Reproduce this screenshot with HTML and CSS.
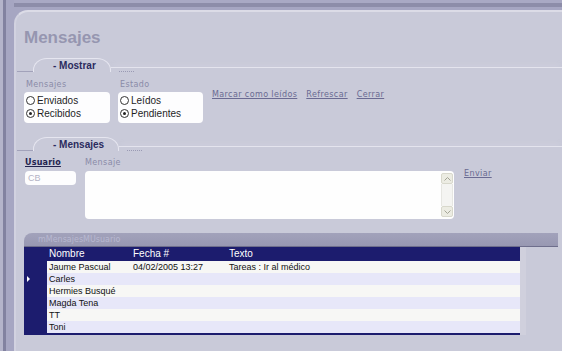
FILE: index.html
```html
<!DOCTYPE html>
<html lang="es">
<head>
    <meta charset="UTF-8">
    <title>Mensajes</title>
    <link rel="stylesheet" href="styles.css">
</head>
<body>
    <div class="frame">
    <div class="panel">
        <h1 class="title">Mensajes</h1>

        <div class="legend">
            <span class="stub"></span>
            <span class="tab">- Mostrar</span>
            <span class="rest"></span>
        </div>

        <div class="filters">
            <div class="group group-a">
                <div class="cap">Mensajes</div>
                <div class="box">
                    <div class="opt"><span class="radio"></span>Enviados</div>
                    <div class="opt"><span class="radio on"></span>Recibidos</div>
                </div>
            </div>
            <div class="group group-b">
                <div class="cap">Estado</div>
                <div class="box">
                    <div class="opt"><span class="radio"></span>Leídos</div>
                    <div class="opt"><span class="radio on"></span>Pendientes</div>
                </div>
            </div>
            <div class="links">
                <a href="#">Marcar como leídos</a>
                <a href="#">Refrescar</a>
                <a href="#">Cerrar</a>
            </div>
        </div>

        <div class="legend legend-2">
            <span class="stub"></span>
            <span class="tab">- Mensajes</span>
            <span class="rest"></span>
        </div>

        <div class="compose">
            <div class="field field-user">
                <div class="cap strong">Usuario</div>
                <div class="input">CB</div>
            </div>
            <div class="field field-msg">
                <div class="cap">Mensaje</div>
                <div class="textarea">
                    <div class="scroll">
                        <span class="sbtn">
                            <svg width="7" height="4" viewBox="0 0 7 4"><path d="M0.5 3.5 L3.5 0.5 L6.5 3.5" fill="none" stroke="#a4a496" stroke-width="1"/></svg>
                        </span>
                        <span class="track"></span>
                        <span class="sbtn">
                            <svg width="7" height="4" viewBox="0 0 7 4"><path d="M0.5 0.5 L3.5 3.5 L6.5 0.5" fill="none" stroke="#a4a496" stroke-width="1"/></svg>
                        </span>
                    </div>
                </div>
            </div>
            <a class="send" href="#">Enviar</a>
        </div>

        <div class="grid">
            <div class="grid-title">mMensajesMUsuario</div>
            <div class="grid-body">
                <div class="grid-table">
                    <table>
                        <colgroup>
                            <col class="c-ind">
                            <col class="c-name">
                            <col class="c-date">
                            <col>
                        </colgroup>
                        <thead>
                            <tr><th></th><th>Nombre</th><th>Fecha #</th><th>Texto</th></tr>
                        </thead>
                        <tbody>
                            <tr><td class="ind"></td><td>Jaume Pascual</td><td>04/02/2005 13:27</td><td>Tareas : Ir al médico</td></tr>
                            <tr><td class="ind"><span class="arrow"></span></td><td>Carles</td><td></td><td></td></tr>
                            <tr><td class="ind"></td><td>Hermies Busqué</td><td></td><td></td></tr>
                            <tr><td class="ind"></td><td>Magda Tena</td><td></td><td></td></tr>
                            <tr><td class="ind"></td><td>TT</td><td></td><td></td></tr>
                            <tr><td class="ind"></td><td>Toni</td><td></td><td></td></tr>
                        </tbody>
                    </table>
                </div>
                <div class="grid-edge"></div>
            </div>
        </div>
    </div>
    </div>
</body>
</html>
```

FILE: styles.css
```css
html, body {
    height: 100%;
    margin: 0;
    overflow: hidden;
    background: #a6a6c2;
}
body {
    font-family: "Liberation Sans", Arial, sans-serif;
}
.frame {
    height: 100%;
    box-sizing: border-box;
    padding: 10px 0 0 14px;
    background:
        linear-gradient(to right, #b4b4ca 0 3px, #8282a0 3px 6px, #a6a6c2 6px) left top / 14px 100% no-repeat,
        linear-gradient(to bottom, #a9a9c4 0 3px, #8d8da9 3px 7px, #a6a6c2 7px) left top / 100% 10px no-repeat,
        #a6a6c2;
}
.panel {
    height: 100%;
    box-sizing: border-box;
    background: #c9cad9;
    border-top: 2px solid #dcdce7;
    border-left: 2px solid #d2d2e0;
    border-top-left-radius: 14px;
    padding: 16px 0 0 8px;
}
.title {
    margin: 0;
    font-size: 17px;
    line-height: 20px;
    font-weight: bold;
    color: #9696b0;
}

/* tab-like section headers */
.legend {
    display: flex;
    align-items: flex-end;
    height: 14px;
    margin: 10px 0 0 -7px;
}
.legend-2 {
    margin-top: 14px;
}
.stub {
    width: 16px;
    border-bottom: 1px solid #a2a2ba;
}
.tab {
    padding: 1px 14px 0 19px;
    line-height: 12px;
    border: 1px solid #e6e6f0;
    border-bottom: 0;
    border-radius: 14px 14px 0 0 / 12px 12px 0 0;
    font-size: 10px;
    font-weight: bold;
    color: #2b2b5e;
}
.rest {
    flex: 1;
    height: 4px;
    border-top: 1px solid #e4e4ee;
    box-shadow: 0 -4px 4px -2px rgba(230, 230, 240, 0.35);
}
.rest::after {
    content: "";
    display: block;
    width: 15px;
    margin: 3px 0 0 8px;
    border-bottom: 1px dotted #9a9ab4;
}

/* filters */
.filters {
    display: flex;
    align-items: flex-start;
    margin-top: 8px;
}
.group {
    display: flex;
    flex-direction: column;
}
.group-a {
    width: 86px;
    margin-right: 8px;
}
.group-b {
    width: 85px;
    margin-right: 9px;
}
.cap {
    font-family: "DejaVu Sans", Verdana, sans-serif;
    font-size: 8px;
    line-height: 10px;
    letter-spacing: 0.4px;
    color: #8a8aa8;
    padding-left: 2px;
}
.box {
    margin-top: 2px;
    background: #fdfdfe;
    border-radius: 4px;
    padding: 2px 0 3px 2px;
}
.opt {
    display: flex;
    align-items: center;
    font-size: 10px;
    line-height: 13px;
    color: #1e1e1e;
}
.radio {
    width: 7px;
    height: 7px;
    border: 1px solid #333;
    border-radius: 50%;
    margin-right: 2px;
    background: #fff;
    display: flex;
    align-items: center;
    justify-content: center;
}
.radio.on::after {
    content: "";
    width: 3px;
    height: 3px;
    border-radius: 50%;
    background: #222;
}
.links {
    display: flex;
    gap: 9px;
    margin-top: 10px;
}
.links a, .send {
    font-family: "DejaVu Sans", Verdana, sans-serif;
    font-size: 8px;
    line-height: 10px;
    letter-spacing: 0.4px;
    color: #6a6a92;
    text-decoration: underline;
}

/* compose */
.compose {
    display: flex;
    align-items: flex-start;
    margin-top: 7px;
    padding-left: 1px;
}
.compose .cap {
    padding-left: 0;
}
.cap.strong {
    color: #23234e;
    font-weight: bold;
    letter-spacing: 0.2px;
    text-decoration: underline;
}
.field-user {
    width: 51px;
    margin-right: 9px;
}
.field-msg {
    width: 369px;
    margin-right: 10px;
}
.input {
    margin-top: 3px;
    height: 14px;
    background: #fdfdfe;
    border-radius: 4px;
    font-size: 9px;
    line-height: 14px;
    color: #b4b4c6;
    padding-left: 3px;
}
.textarea {
    margin-top: 3px;
    height: 48px;
    box-sizing: border-box;
    background: #fefefe;
    border-radius: 4px;
    display: flex;
    justify-content: flex-end;
    padding: 2px 1px;
}
.scroll {
    width: 12px;
    display: flex;
    flex-direction: column;
}
.sbtn {
    height: 11px;
    box-sizing: border-box;
    background: #ecece3;
    border: 1px solid #d8d8cc;
    border-radius: 2px;
    display: flex;
    align-items: center;
    justify-content: center;
}
.track {
    flex: 1;
    background: #f4f4f2;
    border-left: 1px solid #e6e6e2;
    border-right: 1px solid #e6e6e2;
}
.send {
    margin-top: 11px;
}

/* grid */
.grid {
    margin: 14px 4px 0 0;
}
.grid-title {
    height: 14px;
    box-sizing: border-box;
    background: linear-gradient(#a2a2bb, #9898b2);
    border-top-left-radius: 8px;
    border-bottom: 1px solid #6e6e8c;
    padding-left: 14px;
    font-family: "DejaVu Sans", Verdana, sans-serif;
    font-size: 8px;
    line-height: 13px;
    color: #b8b8d0;
}
.grid-body {
    display: flex;
}
.grid-table {
    width: 496px;
    background: #1c1c6e;
    padding-bottom: 2px;
}
.grid-edge {
    width: 6px;
    background: #d0d0dd;
}
table {
    width: 100%;
    table-layout: fixed;
    border-collapse: collapse;
}
.c-ind {
    width: 23px;
}
.c-name {
    width: 84px;
}
.c-date {
    width: 96px;
}
th {
    height: 14px;
    padding: 0 2px;
    font-size: 10px;
    line-height: 14px;
    font-weight: normal;
    text-align: left;
    color: #fff;
}
td {
    height: 12px;
    padding: 0 2px;
    font-size: 9px;
    line-height: 12px;
    color: #111;
    white-space: nowrap;
    background: #f7f7f5;
}
tbody tr:nth-child(even) td {
    background: #e7e7f9;
}
tbody tr td.ind {
    background: #1c1c6e;
    padding: 0 0 0 3px;
}
.arrow {
    display: block;
    width: 0;
    height: 0;
    border-left: 3px solid #fff;
    border-top: 3px solid transparent;
    border-bottom: 3px solid transparent;
}
```
